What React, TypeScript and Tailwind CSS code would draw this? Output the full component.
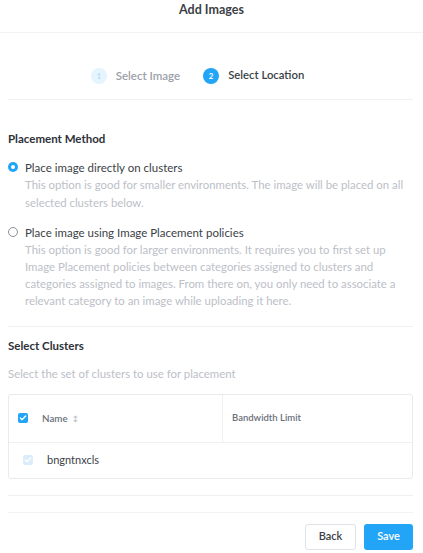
import { Check } from 'lucide-react';

const FONT = { fontFamily: 'Lato, "Open Sans", sans-serif' };

function Radio({ checked }: { checked: boolean }) {
  return checked ? (
    <span className="mt-[3px] flex size-[10px] shrink-0 items-center justify-center rounded-full bg-[#22a5f7]">
      <span className="size-[4px] rounded-full bg-white" />
    </span>
  ) : (
    <span className="mt-[3px] size-[10px] shrink-0 rounded-full border border-[#8a8f99] bg-white" />
  );
}

function Box({ faded }: { faded?: boolean }) {
  return (
    <span
      className={`flex size-[10px] shrink-0 items-center justify-center rounded-[2px] ${
        faded ? 'bg-[#dcecfb]' : 'bg-[#22a5f7]'
      }`}
    >
      <Check className="size-[8px] text-white" strokeWidth={4} />
    </span>
  );
}

export default function App() {
  return (
    <div style={FONT} className="flex h-[553px] w-[423px] flex-col bg-white text-[#3b3f47]">
      <div className="flex h-[33px] items-start justify-center border-b border-[#f2f3f5] pt-[1px]">
        <span className="text-[12.5px] font-bold text-[#3b3f47]">Add Images</span>
      </div>

      <div className="pl-2 pr-[10px]">
        <div className="flex h-[67px] items-center justify-center gap-[23px] border-b border-[#eef0f2] pt-[23px] pb-[4px] pr-[26px]">
          <div className="flex items-center gap-[9px]">
            <span className="flex size-[16px] items-center justify-center rounded-full bg-[#e6f4fe] text-[8px] text-[#a9d7f8]">
              1
            </span>
            <span className="text-[11.5px] font-semibold text-[#9aa0aa]">Select Image</span>
          </div>
          <div className="flex items-center gap-[9px]">
            <span className="flex size-[16px] items-center justify-center rounded-full bg-[#22a5f7] text-[8px] font-bold text-white">
              2
            </span>
            <span className="text-[11.3px] font-semibold text-[#3b3f47]">Select Location</span>
          </div>
        </div>

        <div className="border-b border-[#eef0f2] pt-[30px] pb-[17px]">
          <div className="text-[11.5px] font-bold text-[#2e3138]">Placement Method</div>

          <div className="mt-[12px] flex gap-[7px]">
            <Radio checked />
            <div>
              <div className="text-[11.5px] leading-[17px] text-[#3b3f47]">
                Place image directly on clusters
              </div>
              <p className="text-[11.4px] leading-[18px] text-[#bcc0c7]">
                This option is good for smaller environments. The image will be placed on all
                selected clusters below.
              </p>
            </div>
          </div>

          <div className="mt-[12px] flex gap-[7px]">
            <Radio checked={false} />
            <div>
              <div className="text-[11.5px] leading-[17px] text-[#3b3f47]">
                Place image using Image Placement policies
              </div>
              <p className="text-[11.4px] leading-[17px] text-[#bcc0c7]">
                This option is good for larger environments. It requires you to first set up
                Image Placement policies between categories assigned to clusters and categories
                assigned to images. From there on, you only need to associate a relevant category
                to an image while uploading it here.
              </p>
            </div>
          </div>
        </div>

        <div className="border-b border-[#eef0f2] pt-[10px] pb-[16px]">
          <div className="text-[11.5px] font-bold text-[#2e3138]">Select Clusters</div>
          <div className="mt-[10px] text-[11.4px] text-[#bcc0c7]">
            Select the set of clusters to use for placement
          </div>

          <div className="mt-[12px] rounded-[3px] border border-[#e8eaee]">
            <div className="flex h-[48px] border-b border-[#eef0f2]">
              <div className="flex w-[214px] items-center gap-[14px] border-r border-[#eef0f2] pl-[9px]">
                <Box />
                <span className="flex items-center gap-[5px] text-[9.8px] font-semibold text-[#6b717c]">
                  Name
                  <span className="text-[7px] leading-none text-[#b0b5bd]">↕</span>
                </span>
              </div>
              <div className="flex items-center pl-[9px] text-[9.5px] font-semibold text-[#6b717c]">
                Bandwidth Limit
              </div>
            </div>
            <div className="flex h-[35px] items-center gap-[14px] pl-[14px]">
              <Box faded />
              <span className="text-[11px] text-[#3b3f47]">bngntnxcls</span>
            </div>
          </div>
        </div>

        <div className="h-[17px] border-b border-[#f2f3f5]" />

        <div className="flex justify-end gap-[8px] pt-[11px]">
          <button className="h-[26px] w-[51px] rounded-[3px] border border-[#dfe2e6] bg-white text-[11px] font-semibold text-[#3b3f47]">
            Back
          </button>
          <button className="h-[26px] w-[49px] rounded-[3px] bg-[#22a5f7] text-[11px] font-semibold text-white">
            Save
          </button>
        </div>
      </div>
    </div>
  );
}
